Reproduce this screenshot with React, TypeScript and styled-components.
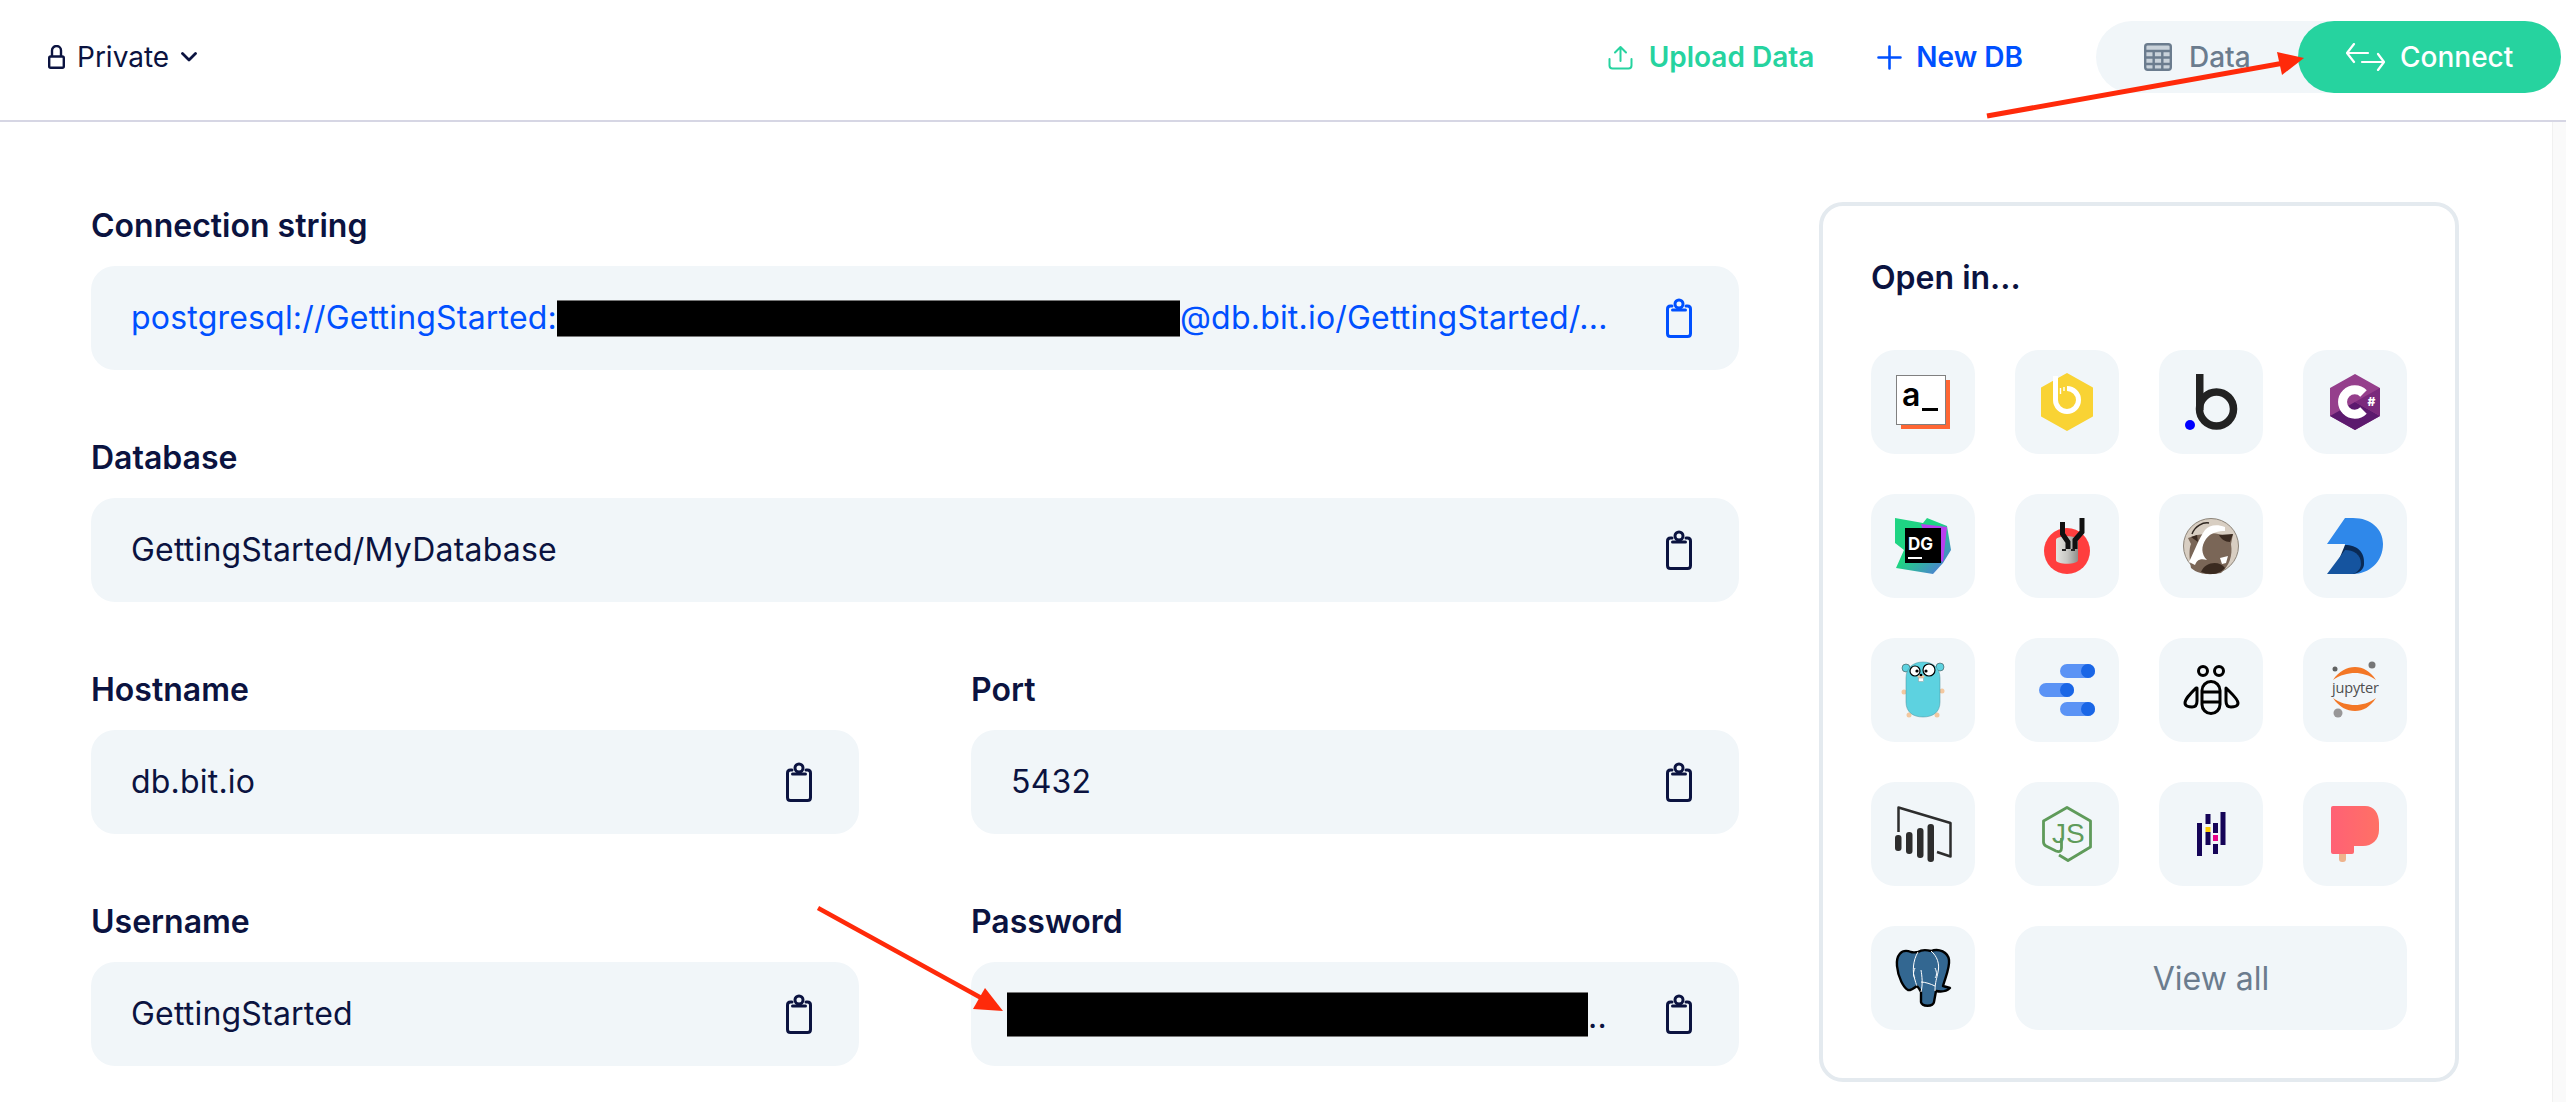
import React from "react";
import styled, { createGlobalStyle } from "styled-components";

const Global = createGlobalStyle`
  html, body { margin: 0; padding: 0; background: #fff; }
  body { font-family: Inter, "Liberation Sans", sans-serif; color: #0b1340; }
  * { box-sizing: border-box; }
`;

const Page = styled.div`
  position: relative;
  width: 2566px;
  height: 1102px;
  overflow: hidden;
  background: #fff;
`;

const Header = styled.header`
  display: flex;
  align-items: center;
  height: 122px;
  padding: 0 5px 6px 48px;
  border-bottom: 2px solid #d6d6e4;
`;

const Visibility = styled.div`
  display: flex;
  align-items: center;
  gap: 12px;
  font-size: 28px;
  line-height: 40px;
  color: #0b1340;
`;

const Actions = styled.div`
  display: flex;
  align-items: center;
  margin-left: auto;
`;

const HeaderLink = styled.div<{ $color: string; $gap: number; $after: number }>`
  display: flex;
  align-items: center;
  gap: ${(p) => p.$gap}px;
  margin-right: ${(p) => p.$after}px;
  color: ${(p) => p.$color};
  font-size: 28px;
  line-height: 40px;
  font-weight: 600;
`;

const Switch = styled.div`
  display: flex;
  align-items: center;
  width: 465px;
  height: 72px;
  border-radius: 36px;
  background: #f1f6f9;
`;

const DataTab = styled.div`
  display: flex;
  align-items: center;
  gap: 17px;
  padding-left: 48px;
  color: #6b7c8e;
  font-size: 28px;
  font-weight: 500;
`;

const ConnectTab = styled.div`
  display: flex;
  align-items: center;
  gap: 15px;
  width: 263px;
  height: 72px;
  margin-left: auto;
  padding-left: 48px;
  border-radius: 36px;
  background: #26d39f;
  color: #fff;
  font-size: 28px;
  font-weight: 500;
`;

const Body = styled.div`
  display: flex;
  height: 980px;
`;

const Content = styled.main`
  flex: 1;
  display: flex;
  align-items: flex-start;
  gap: 80px;
  padding: 80px 0 0 91px;
`;

const Fields = styled.section`
  display: grid;
  grid-template-columns: 768px 768px;
  column-gap: 112px;
  row-gap: 64px;
  width: 1648px;
`;

const Field = styled.div<{ $wide?: boolean }>`
  grid-column: ${(p) => (p.$wide ? "1 / -1" : "auto")};
`;

const Label = styled.div`
  height: 48px;
  margin-bottom: 16px;
  font-size: 32px;
  line-height: 48px;
  font-weight: 600;
  color: #0b1340;
`;

const ValueBox = styled.div<{ $link?: boolean }>`
  display: flex;
  align-items: center;
  justify-content: space-between;
  height: 104px;
  padding: 0 47px 0 40px;
  border-radius: 24px;
  background: #f1f6f9;
  color: ${(p) => (p.$link ? "#0050ff" : "#0b1340")};
`;

const Value = styled.div`
  display: flex;
  align-items: center;
  font-size: 32px;
  line-height: 48px;
  letter-spacing: 0.2px;
  white-space: nowrap;
`;

const Redaction = styled.span<{ $width: number; $height: number; $shift?: number }>`
  display: block;
  width: ${(p) => p.$width}px;
  height: ${(p) => p.$height}px;
  margin-left: ${(p) => p.$shift ?? 0}px;
  background: #000;
  border-top: 1px solid #777;
  border-bottom: 1px solid #777;
`;

const TrailingDots = styled.span`
  align-self: flex-end;
  margin-bottom: -4px;
`;

const Card = styled.aside`
  width: 640px;
  height: 880px;
  padding: 48px;
  border: 4px solid #e4eaef;
  border-radius: 24px;
  background: #fff;
`;

const CardTitle = styled.h2`
  height: 48px;
  margin: 0 0 48px;
  font-size: 32px;
  line-height: 48px;
  font-weight: 600;
  color: #0b1340;
`;

const ToolGrid = styled.div`
  display: grid;
  grid-template-columns: repeat(4, 104px);
  grid-auto-rows: 104px;
  gap: 40px;
`;

const Tile = styled.div`
  display: flex;
  align-items: center;
  justify-content: center;
  border-radius: 24px;
  background: #f1f6f9;
`;

const ViewAll = styled(Tile)`
  grid-column: span 3;
  color: #6b7c8e;
  font-size: 32px;
`;

const ScrollTrack = styled.div`
  width: 14px;
  background: #fafafa;
  border-left: 1px solid #f1f1f1;
`;

const Overlay = styled.svg`
  position: absolute;
  inset: 0;
  pointer-events: none;
`;

const Logo = ({ children }: { children: React.ReactNode }) => (
  <svg width="104" height="104" viewBox="0 0 104 104" aria-hidden="true">
    {children}
  </svg>
);

const Clipboard = ({ color }: { color: string }) => (
  <svg width="26" height="40" viewBox="0 0 26 40" fill="none" stroke={color} strokeWidth="3" strokeLinecap="round" strokeLinejoin="round">
    <path d="M6 8H4.5Q1.5 8 1.5 11V35.5Q1.5 38.5 4.5 38.5H21.5Q24.5 38.5 24.5 35.5V11Q24.5 8 21.5 8H20" />
    <circle cx="13" cy="6" r="4" />
    <path d="M6.5 12H19.5" />
  </svg>
);

const AppLogos: React.ReactNode[] = [
  <Logo>
    <rect x="30" y="30" width="49" height="49" fill="#ff6633" />
    <rect x="25.5" y="25.5" width="49" height="49" fill="#fff" stroke="#808080" />
    <text x="31" y="56" fontFamily="Inter, sans-serif" fontSize="32" fontWeight="600" fill="#000">a</text>
    <rect x="51" y="58" width="16" height="3" fill="#000" />
  </Logo>,
  <Logo>
    <path d="M52 24L77 38V66L52 80L27 66V38Z" fill="#f9d334" stroke="#f9d334" strokeWidth="2" strokeLinejoin="round" />
    <path d="M40.5 26V50A11.5 11.5 0 1 0 52 38.5" fill="none" stroke="#fff" strokeWidth="5" />
    <path d="M45.500 38V44M49 37V41" stroke="#fff" strokeWidth="1.4" />
  </Logo>,
  <Logo>
    <rect x="37" y="24" width="7.5" height="36" fill="#222" />
    <circle cx="57.5" cy="59" r="17" fill="none" stroke="#222" strokeWidth="7.5" />
    <circle cx="31" cy="75" r="5" fill="#0000ff" />
  </Logo>,
  <Logo>
    <path d="M52 24L77 38V66L52 80L27 66V38Z" fill="#953f8c" />
    <path d="M52 52L27 66L52 80L77 66Z" fill="#5c1a6e" />
    <path d="M52 52L77 38V66Z" fill="#7a2a7c" />
    <path d="M60.500 43.500A12.200 12.200 0 1 0 60.500 60.500" fill="none" stroke="#fff" strokeWidth="9" />
    <text x="64.500" y="56" fontFamily="Inter, sans-serif" fontSize="12" fontWeight="800" fill="#fff">#</text>
  </Logo>,
  <Logo>
    <defs>
      <linearGradient id="dg1" x1="0" y1="0" x2="1" y2="1">
        <stop offset="0.45" stopColor="#1fd483" />
        <stop offset="1" stopColor="#5a68e8" />
      </linearGradient>
    </defs>
    <path d="M24 24L52 29L56 24L76 32L80 56L72 69L62 80L25 74L33 56L24 49Z" fill="url(#dg1)" />
    <path d="M50 30L76 33L72 68L60 60Z" fill="#b93ff0" />
    <rect x="34" y="34" width="36" height="35" fill="#000" />
    <text x="37" y="56" fontFamily="Inter, sans-serif" fontSize="17" fontWeight="700" fill="#fff">DG</text>
    <rect x="37" y="63" width="14" height="2" fill="#fff" />
  </Logo>,
  <Logo>
    <defs>
      <linearGradient id="cyl" x1="0" y1="0" x2="1" y2="0">
        <stop offset="0" stopColor="#e4e4e0" />
        <stop offset="0.5" stopColor="#c8c8c4" />
        <stop offset="1" stopColor="#8f8f8b" />
      </linearGradient>
    </defs>
    <circle cx="52" cy="57" r="23" fill="#ff3e3e" />
    <path d="M41 46C41 41 63 41 63 46V66C63 71 41 71 41 66Z" fill="url(#cyl)" />
    <path d="M47.500 28V40L53 48V55M67 24V38L60 46V55" fill="none" stroke="#111" strokeWidth="5" />
    <path d="M47 56H51M56 56H60" stroke="#222" strokeWidth="2" />
  </Logo>,
  <Logo>
    <circle cx="52" cy="52" r="27.5" fill="#d8cec2" stroke="#8c8479" />
    <path d="M29 44L38 41L46 40C54 38 62 40 66 42L74 40L72 50C74 62 70 72 62 79C52 81 40 81 32 74C30 64 30 54 32 50Z" fill="#7a6657" />
    <path d="M32 43L38 41L39 48Z M60 41L74 40L71 48C66 48 62 45 60 41Z" fill="#3a2a20" />
    <path d="M42 78C46 68 60 66 66 74C62 78 58 80 52 80C48 80 45 79 42 78Z" fill="#3a2a20" />
    <path d="M66 33C58 30 50 31 46 36C40 44 36 56 30 68L36 71C38 66 41 64 48 66C42 60 42 52 47 45C52 38 60 37 66 37Z" fill="#fff" />
    <path d="M61 64L69 62L67 69L63 70Z" fill="#fff" />
    <path d="M33 40C36 32 44 28 50 29" fill="none" stroke="#2f2620" strokeWidth="1.5" />
  </Logo>,
  <Logo>
    <path d="M42 24H50C68 24 80 35 80 50C80 68 66 80 50 80H40L42 50H24Z" fill="#2f88ea" />
    <path d="M42 51C54 51 62 58 61 70C61 75 57 79 50 80H30Z" fill="#0a2a55" />
    <path d="M42 56C50 56 58 60 58 70C58 74 55 78 50 80H24Z" fill="#15549f" />
  </Logo>,
  <Logo>
    <circle cx="35" cy="30" r="4" fill="#5dd2e0" stroke="#333" strokeWidth="0.5" />
    <circle cx="69" cy="29" r="4" fill="#5dd2e0" stroke="#333" strokeWidth="0.5" />
    <circle cx="33" cy="54" r="2.5" fill="#f3c8a0" />
    <circle cx="71" cy="53" r="2.5" fill="#f3c8a0" />
    <circle cx="38" cy="77" r="2.5" fill="#f3c8a0" />
    <circle cx="66" cy="77" r="2.5" fill="#f3c8a0" />
    <path d="M35 40C35 30 42 24 52 24C62 24 69 30 69 40V64C69 74 62 79 52 79C42 79 35 74 35 64Z" fill="#5dd2e0" stroke="#4a8f9a" strokeWidth="0.5" />
    <circle cx="44" cy="33" r="5" fill="#fff" stroke="#000" strokeWidth="1.2" />
    <circle cx="58" cy="32" r="6" fill="#fff" stroke="#000" strokeWidth="1.2" />
    <circle cx="46" cy="33" r="1.6" fill="#000" />
    <circle cx="55" cy="33" r="1.6" fill="#000" />
    <ellipse cx="50" cy="38.5" rx="3.5" ry="1.6" fill="#f3c8a0" />
    <circle cx="50" cy="37" r="1.3" fill="#000" />
    <rect x="47.5" y="40" width="5" height="3.5" fill="#fff" stroke="#888" strokeWidth="0.4" />
  </Logo>,
  <Logo>
    <rect x="45" y="26" width="35" height="14" rx="7" fill="#5b93f5" />
    <circle cx="73" cy="33" r="7" fill="#1a66e6" />
    <rect x="24" y="45" width="35" height="14" rx="7" fill="#5b93f5" />
    <circle cx="52" cy="52" r="7" fill="#1a66e6" />
    <rect x="45" y="64" width="35" height="14" rx="7" fill="#5b93f5" />
    <circle cx="73" cy="71" r="7" fill="#1a66e6" />
  </Logo>,
  <Logo>
    <g fill="none" stroke="#000" strokeWidth="3">
      <circle cx="44" cy="33" r="4.5" />
      <circle cx="60" cy="33" r="4.5" />
      <rect x="43" y="43.5" width="18" height="32" rx="9" />
      <path d="M43 54H61M43 64H61" />
      <path d="M37 50C31 56 26 61 26 65C26 68 30 69 33 69C37 69 38 66 38 63V50Z" strokeLinejoin="round" />
      <path d="M67 50C73 56 79 61 79 65C79 68 75 69 72 69C68 69 67 66 67 63V50Z" strokeLinejoin="round" />
    </g>
  </Logo>,
  <Logo>
    <path d="M30 42C36 33 44 29 52 29C60 29 67 33 73 42C66 37 59 35 52 35C45 35 37 37 30 42Z" fill="#f37726" />
    <path d="M30 60C37 65 45 67 52 67C59 67 66 65 73 60C67 69 60 73 52 73C44 73 36 69 30 60Z" fill="#f37726" />
    <text x="29" y="55" fontFamily="'Open Sans', sans-serif" fontSize="14.5" fill="#4e4e4e" textLength="47">jupyter</text>
    <circle cx="69" cy="27" r="3.5" fill="#767677" />
    <circle cx="32" cy="31" r="2.5" fill="#616262" />
    <circle cx="35" cy="75" r="4.5" fill="#989798" />
  </Logo>,
  <Logo>
    <path d="M27.5 50V25.5L79.5 41V74.5L66 70" fill="none" stroke="#2d2d2d" strokeWidth="2.5" strokeLinejoin="round" />
    <rect x="24" y="53" width="6.5" height="16" rx="3" fill="#2d2d2d" />
    <rect x="35" y="50" width="6.5" height="22" rx="3" fill="#2d2d2d" />
    <rect x="46" y="46" width="6.5" height="30" rx="3" fill="#2d2d2d" />
    <rect x="56.5" y="42" width="6.5" height="38" rx="3" fill="#2d2d2d" />
  </Logo>,
  <Logo>
    <path d="M46.500 56V66Q46.500 71 41 69L31 64Q28.500 62.500 28.500 60V39L52 25.500L75.500 39V65L53 78.500L44 73" fill="none" stroke="#5f9b5a" strokeWidth="2.8" strokeLinejoin="round" />
    <text x="37" y="61" fontFamily="'Liberation Sans', sans-serif" fontSize="28" fill="#5f9b5a">JS</text>
  </Logo>,
  <Logo>
    <rect x="38" y="41" width="5" height="33" fill="#150458" />
    <rect x="46.500" y="32" width="5" height="10" fill="#150458" />
    <rect x="46.500" y="45" width="5" height="5" fill="#ffca00" />
    <rect x="46.500" y="50" width="5" height="13" fill="#150458" />
    <rect x="54" y="41" width="5" height="10" fill="#150458" />
    <rect x="54" y="53" width="5" height="6" fill="#e70488" />
    <rect x="54" y="62" width="5" height="10" fill="#150458" />
    <rect x="61.500" y="30" width="5" height="33" fill="#150458" />
  </Logo>,
  <Logo>
    <defs>
      <linearGradient id="pop" x1="0" y1="0" x2="1" y2="0">
        <stop offset="0" stopColor="#ff6175" />
        <stop offset="1" stopColor="#ff7165" />
      </linearGradient>
    </defs>
    <rect x="36" y="68" width="7" height="12" rx="3" fill="#eeb38c" />
    <path d="M30 24H62C71 24 76 31 76 41V48C76 58 69 64 60 64H51V70Q51 72 49 72H30Q28 72 28 70V26Q28 24 30 24Z" fill="url(#pop)" />
  </Logo>,
  <Logo>
    <path d="M40 26C30 22 25 30 26 40C27 52 33 62 37 64C40 65 43 62 46 60C48 62 49 64 50 66V76C51 81 62 81 63 76L65 65C70 66 76 65 79 62L72 60C74 52 79 42 78 34C77 26 68 22 60 25C56 24 50 24 47 26C45 26 43 27 40 26Z" fill="#336791" stroke="#000" strokeWidth="2.4" strokeLinejoin="round" />
    <path d="M47 26C42 34 41 46 44 54C45 58 46 60 46 60M60 25C66 30 69 38 67 46C66 52 64 56 64 65M44 42C42 46 42 50 44 52M64 42C66 46 66 50 64 52M50 66C52 58 51 50 50 44M50 56C54 56 60 58 64 60" fill="none" stroke="#fff" strokeWidth="1" />
  </Logo>,
];

export default function App() {
  return (
    <Page>
      <Global />
      <Header>
        <Visibility>
          <svg width="17" height="24" viewBox="0 0 17 24" fill="none" stroke="#0b1340" strokeWidth="2.4" strokeLinejoin="round">
            <rect x="1.2" y="11.500" width="14.6" height="11.300" rx="1.500" />
            <path d="M4 11.500V5.500A4.500 4.500 0 0 1 13 5.500V11.500" />
          </svg>
          <span>Private</span>
          <svg width="16" height="10" viewBox="0 0 16 10" fill="none" stroke="#0b1340" strokeWidth="2.8" strokeLinecap="round" strokeLinejoin="round">
            <path d="M1.500 1.500L8 8L14.500 1.500" />
          </svg>
        </Visibility>
        <Actions>
          <HeaderLink $color="#26d39f" $gap={16} $after={63}>
            <svg width="25" height="25" viewBox="0 0 25 25" fill="none" stroke="#26d39f" strokeWidth="2" strokeLinecap="round" strokeLinejoin="round">
              <path d="M1.500 14V20.500Q1.500 23.500 4.500 23.500H20.500Q23.500 23.500 23.500 20.500V14" />
              <path d="M12.500 16V2M7 7.500L12.500 2L18 7.500" />
            </svg>
            <span>Upload Data</span>
          </HeaderLink>
          <HeaderLink $color="#0050ff" $gap={14} $after={73}>
            <svg width="25" height="25" viewBox="0 0 25 25" fill="none" stroke="#0050ff" strokeWidth="2.6" strokeLinecap="round">
              <path d="M12.500 1.500V23.500M1.500 12.500H23.500" />
            </svg>
            <span>New DB</span>
          </HeaderLink>
          <Switch>
            <DataTab>
              <svg width="28" height="28" viewBox="0 0 28 28" fill="none" stroke="#6b7c8e" strokeWidth="2.4">
                <rect x="1.200" y="1.200" width="25.600" height="25.600" rx="2.500" fill="#c9d2da" />
                <path d="M1.200 8H26.800M1.200 14.500H26.800M1.200 21H26.800M9.700 8V26.800M18.300 8V26.800" />
              </svg>
              <span>Data</span>
            </DataTab>
            <ConnectTab>
              <svg width="39" height="28" viewBox="0 0 39 28" fill="none" stroke="#fff" strokeWidth="2.2" strokeLinecap="round" strokeLinejoin="round">
                <path d="M22 10H1M8 1L1 10L8 19" />
                <path d="M16 19H38M32 11L38 19L32 27" />
              </svg>
              <span>Connect</span>
            </ConnectTab>
          </Switch>
        </Actions>
      </Header>
      <Body>
        <Content>
          <Fields>
            <Field $wide>
              <Label>Connection string</Label>
              <ValueBox $link>
                <Value>
                  postgresql://GettingStarted:
                  <Redaction $width={623} $height={37} />
                  @db.bit.io/GettingStarted/...
                </Value>
                <Clipboard color="#0050ff" />
              </ValueBox>
            </Field>
            <Field $wide>
              <Label>Database</Label>
              <ValueBox>
                <Value>GettingStarted/MyDatabase</Value>
                <Clipboard color="#0b1340" />
              </ValueBox>
            </Field>
            <Field>
              <Label>Hostname</Label>
              <ValueBox>
                <Value>db.bit.io</Value>
                <Clipboard color="#0b1340" />
              </ValueBox>
            </Field>
            <Field>
              <Label>Port</Label>
              <ValueBox>
                <Value>5432</Value>
                <Clipboard color="#0b1340" />
              </ValueBox>
            </Field>
            <Field>
              <Label>Username</Label>
              <ValueBox>
                <Value>GettingStarted</Value>
                <Clipboard color="#0b1340" />
              </ValueBox>
            </Field>
            <Field>
              <Label>Password</Label>
              <ValueBox>
                <Value>
                  <Redaction $width={581} $height={45} $shift={-4} />
                  <TrailingDots>..</TrailingDots>
                </Value>
                <Clipboard color="#0b1340" />
              </ValueBox>
            </Field>
          </Fields>
          <Card>
            <CardTitle>Open in...</CardTitle>
            <ToolGrid>
              {AppLogos.map((logo, i) => (
                <Tile key={i}>{logo}</Tile>
              ))}
              <ViewAll>View all</ViewAll>
            </ToolGrid>
          </Card>
        </Content>
        <ScrollTrack />
      </Body>
      <Overlay width="2566" height="1102" viewBox="0 0 2566 1102">
        <path d="M1987 116L2284 63" stroke="#ff2a0a" strokeWidth="5" />
        <path d="M2304 58L2277 52L2282 75Z" fill="#ff2a0a" />
        <path d="M818 908L985 1000" stroke="#ff2a0a" strokeWidth="4.500" />
        <path d="M1003 1011L985 988L973 1009Z" fill="#ff2a0a" />
      </Overlay>
    </Page>
  );
}
